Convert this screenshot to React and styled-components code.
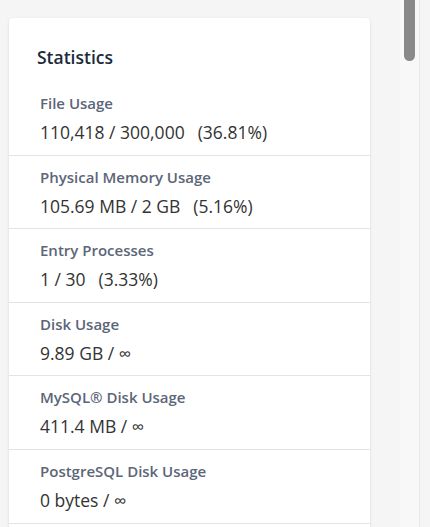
import React from 'react';
import styled, { createGlobalStyle } from 'styled-components';

const stats = [
  { label: 'File Usage', value: '110,418 / 300,000', extra: '(36.81%)' },
  { label: 'Physical Memory Usage', value: '105.69 MB / 2 GB', extra: '(5.16%)' },
  { label: 'Entry Processes', value: '1 / 30', extra: '(3.33%)' },
  { label: 'Disk Usage', value: '9.89 GB / ∞' },
  { label: 'MySQL® Disk Usage', value: '411.4 MB / ∞' },
  { label: 'PostgreSQL Disk Usage', value: '0 bytes / ∞' },
];

const App = () => {
  return (
    <>
      <GlobalStyle />
      <Page>
        <Main>
          <PrevCard />
          <Card>
            <Title>Statistics</Title>
            {stats.map((s) => (
              <Row key={s.label}>
                <Label>{s.label}</Label>
                <Value>
                  {s.value}
                  {s.extra && <Extra>{s.extra}</Extra>}
                </Value>
              </Row>
            ))}
          </Card>
        </Main>
        <Track>
          <Thumb />
        </Track>
        <Edge />
      </Page>
    </>
  );
};

export default App;

const GlobalStyle = createGlobalStyle`
  html, body {
    margin: 0;
    padding: 0;
    background: #f5f5f5;
  }
  body {
    font-family: "Open Sans", "Liberation Sans", sans-serif;
  }
`;

const Page = styled.div`
  display: flex;
  height: 527px;
  overflow: hidden;
  background: #f5f5f5;
`;

const Main = styled.div`
  width: 400px;
  padding-left: 9px;
  box-sizing: border-box;
  display: flex;
  flex-direction: column;
`;

const PrevCard = styled.div`
  width: 361px;
  height: 1px;
  background: #fbfbfb;
  box-shadow: 0 1px 3px rgba(0, 0, 0, 0.12);
  border-radius: 0 0 4px 4px;
`;

const Card = styled.div`
  width: 361px;
  margin-top: 18px;
  background: #fff;
  border-radius: 4px;
  box-shadow: 0 1px 3px rgba(0, 0, 0, 0.12);
  padding: 27px 0 40px;
`;

const Title = styled.h2`
  margin: 0 0 13px 28px;
  font-size: 17.5px;
  font-weight: 600;
  color: #1b2a3b;
  line-height: 24px;
`;

const Row = styled.div`
  padding: 11px 0 0 31px;
  height: 73.6px;
  box-sizing: border-box;
  border-bottom: 1px solid #e3e3e3;
`;

const Label = styled.div`
  font-size: 15px;
  font-weight: 600;
  color: #5b6678;
  line-height: 20px;
`;

const Value = styled.div`
  margin-top: 8px;
  font-size: 17.5px;
  color: #333;
  line-height: 22px;
`;

const Extra = styled.span`
  margin-left: 13px;
`;

const Track = styled.div`
  width: 19px;
  background: #f8f8f8;
`;

const Thumb = styled.div`
  width: 11px;
  height: 61px;
  margin-left: 4px;
  background: #898989;
  border-radius: 0 0 6px 6px;
`;

const Edge = styled.div`
  flex: 1;
  border-left: 1px solid #e8e8e8;
  background: #f5f5f5;
`;
